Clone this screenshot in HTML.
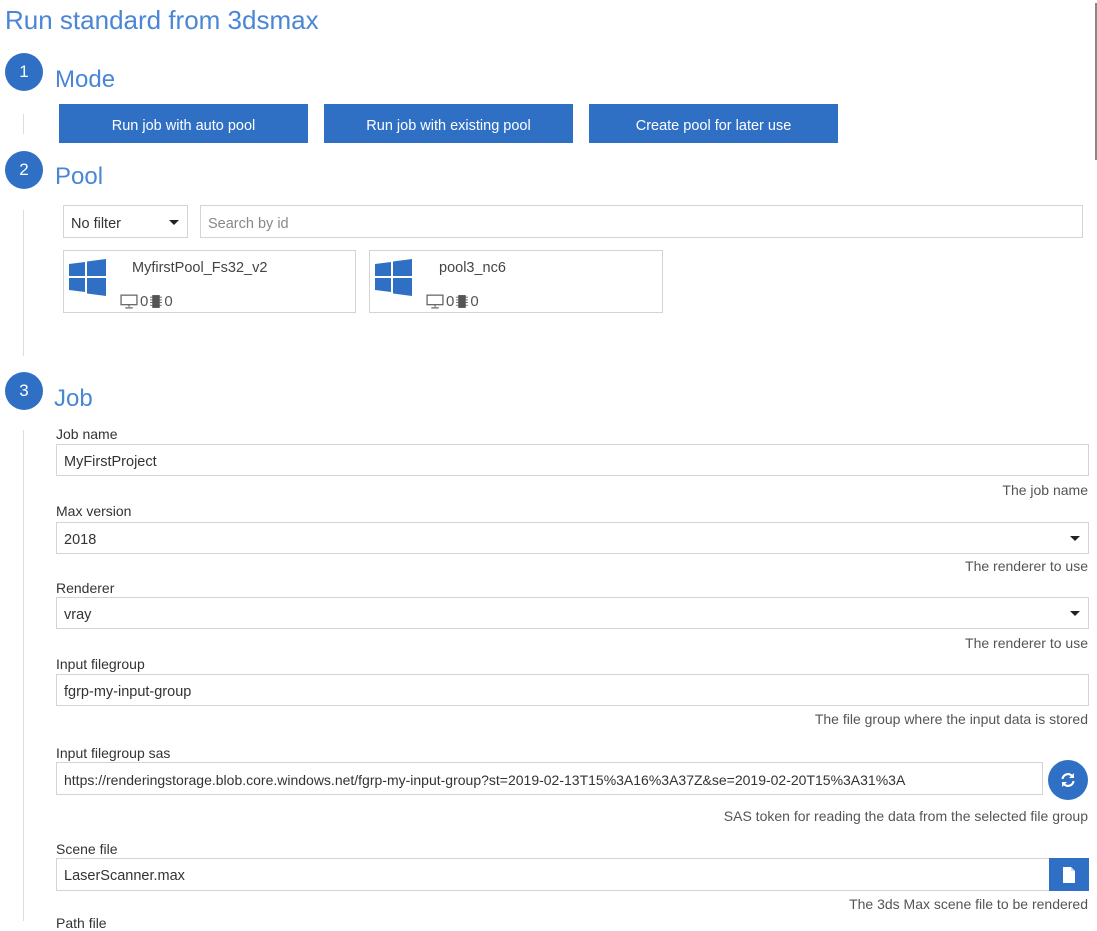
<!DOCTYPE html>
<html><head><meta charset="utf-8"><style>
*{box-sizing:border-box;margin:0;padding:0}
body{width:1097px;height:921px;overflow:hidden;background:#fff;font-family:"Liberation Sans",sans-serif;color:#333;position:relative}
.a{position:absolute}
.h{color:#4a86d6;font-weight:300}
.c{position:absolute;left:5px;width:38px;height:38px;border-radius:50%;background:#2f6fc4;color:#fff;font-size:17px;text-align:center;line-height:38px}
.vl{position:absolute;left:23px;width:1px;background:#ddd}
.btn{position:absolute;top:104px;height:39px;width:249px;background:#2f70c4;color:#fff;font-size:14.5px;text-align:center;line-height:44px}
.box{position:absolute;border:1px solid #d4d4d4;background:#fff;font-size:14.5px;padding-left:7px;white-space:nowrap;overflow:hidden}
.lbl{position:absolute;left:56px;font-size:14px;color:#333}
.help{position:absolute;right:9px;font-size:14px;color:#555}
.arr{position:absolute;right:8px;top:13px;width:0;height:0;border-left:5px solid transparent;border-right:5px solid transparent;border-top:5px solid #222}
.card{position:absolute;top:250px;height:63px;border:1px solid #d4d4d4}
</style></head><body>
<div class="a h" style="left:5px;top:5px;font-size:26px">Run standard from 3dsmax</div>
<div class="a" style="left:1095px;top:3px;width:2px;height:157px;background:#888"></div>

<div class="c" style="top:53px">1</div>
<div class="a h" style="left:55px;top:66px;font-size:24px">Mode</div>
<div class="vl" style="top:114px;height:20px"></div>
<div class="btn" style="left:59px">Run job with auto pool</div>
<div class="btn" style="left:324px">Run job with existing pool</div>
<div class="btn" style="left:589px">Create pool for later use</div>

<div class="c" style="top:151px">2</div>
<div class="a h" style="left:55px;top:163px;font-size:24px">Pool</div>
<div class="vl" style="top:210px;height:146px"></div>
<div class="box" style="left:63px;top:205px;width:125px;height:33px;line-height:36px;padding-left:7px">No filter<div class="arr" style="top:14px;right:8px"></div></div>
<div class="box" style="left:200px;top:205px;width:883px;height:33px;line-height:36px;color:#888">Search by id</div>

<div class="card" style="left:63px;width:293px"></div>
<div class="card" style="left:369px;width:294px"></div>
<svg class="a" style="left:69px;top:259px" width="37" height="37" viewBox="0 0 37 37"><g fill="#2f70c4"><polygon points="0,5 16,3 16,17 0,17"/><polygon points="18,2.5 37,0 37,17 18,17"/><polygon points="0,19 16,19 16,33 0,31"/><polygon points="18,19 37,19 37,37 18,34.5"/></g></svg>
<svg class="a" style="left:375px;top:259px" width="37" height="37" viewBox="0 0 37 37"><g fill="#2f70c4"><polygon points="0,5 16,3 16,17 0,17"/><polygon points="18,2.5 37,0 37,17 18,17"/><polygon points="0,19 16,19 16,33 0,31"/><polygon points="18,19 37,19 37,37 18,34.5"/></g></svg>
<div class="a" style="left:132px;top:260px;font-size:14.5px;color:#444">MyfirstPool_Fs32_v2</div>
<div class="a" style="left:439px;top:260px;font-size:14.5px;color:#444">pool3_nc6</div>
<div class="a" style="left:120px;top:293px;font-size:15px;color:#555;display:flex;align-items:center;gap:2px"><svg width="18" height="15" viewBox="0 0 17 14"><rect x="1" y="1" width="15" height="9" fill="none" stroke="#666" stroke-width="1.2"/><path d="M8.5 10v2M5 13h7" stroke="#666" stroke-width="1.2"/></svg>0<svg width="12" height="15" viewBox="0 0 11 14"><rect x="2" y="1" width="7" height="12" fill="#555"/><path d="M0 3h11M0 5.5h11M0 8h11M0 10.5h11" stroke="#555" stroke-width=".8"/></svg>0</div>
<div class="a" style="left:426px;top:293px;font-size:15px;color:#555;display:flex;align-items:center;gap:2px"><svg width="18" height="15" viewBox="0 0 17 14"><rect x="1" y="1" width="15" height="9" fill="none" stroke="#666" stroke-width="1.2"/><path d="M8.5 10v2M5 13h7" stroke="#666" stroke-width="1.2"/></svg>0<svg width="12" height="15" viewBox="0 0 11 14"><rect x="2" y="1" width="7" height="12" fill="#555"/><path d="M0 3h11M0 5.5h11M0 8h11M0 10.5h11" stroke="#555" stroke-width=".8"/></svg>0</div>

<div class="c" style="top:372px">3</div>
<div class="a h" style="left:54px;top:385px;font-size:24px">Job</div>
<div class="vl" style="top:430px;height:491px"></div>

<div class="lbl" style="top:426px">Job name</div>
<div class="box" style="left:56px;top:444px;width:1033px;height:32px;line-height:34px">MyFirstProject</div>
<div class="help" style="top:482px">The job name</div>

<div class="lbl" style="top:503px">Max version</div>
<div class="box" style="left:56px;top:522px;width:1033px;height:32px;line-height:34px">2018<div class="arr"></div></div>
<div class="help" style="top:558px">The renderer to use</div>

<div class="lbl" style="top:580px">Renderer</div>
<div class="box" style="left:56px;top:597px;width:1033px;height:32px;line-height:34px">vray<div class="arr"></div></div>
<div class="help" style="top:635px">The renderer to use</div>

<div class="lbl" style="top:656px">Input filegroup</div>
<div class="box" style="left:56px;top:674px;width:1033px;height:32px;line-height:34px">fgrp-my-input-group</div>
<div class="help" style="top:711px">The file group where the input data is stored</div>

<div class="lbl" style="top:745px">Input filegroup sas</div>
<div class="box" style="left:56px;top:762px;width:987px;height:33px;line-height:35px;font-size:14px">https://renderingstorage.blob.core.windows.net/fgrp-my-input-group?st=2019-02-13T15%3A16%3A37Z&amp;se=2019-02-20T15%3A31%3A</div>
<div class="a" style="left:1048px;top:760px;width:40px;height:40px;border-radius:50%;background:#2f70c4"></div>
<svg class="a" style="left:1060px;top:772px" width="16" height="16" viewBox="0 0 16 16"><path d="M2.5 7A5.5 5.5 0 0 1 12.5 4.5M13.5 9A5.5 5.5 0 0 1 3.5 11.5" fill="none" stroke="#fff" stroke-width="2.2"/><path d="M14 1v5h-5zM2 15v-5h5z" fill="#fff"/></svg>
<div class="help" style="top:808px">SAS token for reading the data from the selected file group</div>

<div class="lbl" style="top:841px">Scene file</div>
<div class="box" style="left:56px;top:858px;width:994px;height:33px;line-height:35px">LaserScanner.max</div>
<div class="a" style="left:1049px;top:858px;width:40px;height:33px;background:#2f70c4"></div>
<svg class="a" style="left:1062px;top:867px" width="14" height="16" viewBox="0 0 14 16"><path d="M1 0h8l4 4v12H1z" fill="#fff"/><path d="M9 0v4h4" fill="#cfdcf0"/></svg>
<div class="help" style="top:896px">The 3ds Max scene file to be rendered</div>
<div class="lbl" style="top:915px">Path file</div>
</body></html>
